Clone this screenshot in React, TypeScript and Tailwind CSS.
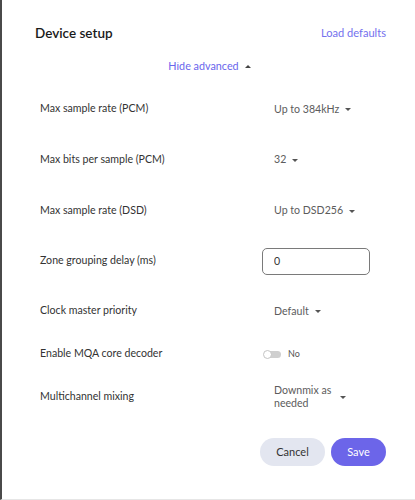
import React, { useState } from 'react';

const Caret = ({ up = false, className = '' }: { up?: boolean; className?: string }) => (
  <svg width="6" height="3" viewBox="0 0 6 3" className={className}>
    {up ? <path d="M0 3 L3 0 L6 3 Z" fill="currentColor" /> : <path d="M0 0 L6 0 L3 3 Z" fill="currentColor" />}
  </svg>
);

const Select = ({ value }: { value: React.ReactNode }) => (
  <div className="flex items-center gap-[6px] pl-[12px] text-[10.6px] leading-[13px] text-[#5c5c5c]">
    <span>{value}</span>
    <Caret className="text-[#555] mt-[1px]" />
  </div>
);

const Row = ({ label, h, children }: { label: string; h: string; children: React.ReactNode }) => (
  <div className={`flex items-center ${h}`}>
    <div className="w-[260px] shrink-0 pl-[38px] text-[10.6px] text-[#333]">{label}</div>
    <div className="flex-1">{children}</div>
  </div>
);

const App: React.FC = () => {
  const [mqa, setMqa] = useState(false);
  const [delay, setDelay] = useState('0');

  return (
    <div className="w-[415px] h-[500px] bg-white border-l-2 border-[#4a4a4a] border-b border-b-[#e6e6e6] overflow-hidden font-['Lato','Noto_Sans',sans-serif]">
      <div className="h-[62px] pt-[4px] flex items-center justify-between pl-[33px] pr-[29px]">
        <h2 className="text-[13.5px] font-semibold text-[#1a1a1a]">Device setup</h2>
        <button className="text-[11.1px] text-[#7471ee]">Load defaults</button>
      </div>

      <div className="h-[366px] overflow-hidden">
        <div className="-mt-[9px] mb-[5px] h-[26px] flex items-center justify-center gap-[6px] pl-[2px] text-[10.8px] text-[#6a66ec]">
          <span>Hide advanced</span>
          <Caret up className="text-[#444]" />
        </div>
        <Row label="Max sample rate (PCM)" h="h-[50px]">
          <Select value="Up to 384kHz" />
        </Row>
        <Row label="Max bits per sample (PCM)" h="h-[51px]">
          <Select value="32" />
        </Row>
        <Row label="Max sample rate (DSD)" h="h-[51px]">
          <Select value="Up to DSD256" />
        </Row>
        <Row label="Zone grouping delay (ms)" h="h-[50px]">
          <input
            value={delay}
            onChange={(e) => setDelay(e.target.value)}
            className="w-[108px] h-[27px] border border-[#7a7a7a] rounded-[5px] px-[11px] text-[10.6px] text-[#333] outline-none"
          />
        </Row>
        <Row label="Clock master priority" h="h-[50px]">
          <Select value="Default" />
        </Row>
        <Row label="Enable MQA core decoder" h="h-[36px]">
          <button onClick={() => setMqa(!mqa)} className="flex items-center gap-[7px] pl-[2px]">
            <span className={`relative w-[17px] h-[7px] rounded-full ${mqa ? 'bg-[#a6a3f5]' : 'bg-[#cfcfcf]'}`}>
              <span className={`absolute top-[-1px] w-[9px] h-[9px] rounded-full bg-white border border-[#c4c4c4] ${mqa ? 'left-[8px]' : 'left-[-1px]'}`} />
            </span>
            <span className="text-[9px] text-[#555]">{mqa ? 'Yes' : 'No'}</span>
          </button>
        </Row>
        <Row label="Multichannel mixing" h="h-[50px]">
          <div className="flex items-center gap-[6px] pl-[12px] text-[10.6px] leading-[13px] text-[#5c5c5c]">
            <span className="w-[60px]">Downmix as needed</span>
            <Caret className="text-[#555] mt-[1px]" />
          </div>
        </Row>
      </div>

      <div className="flex justify-end gap-[6px] pr-[29px] pt-[10px]">
        <button className="h-[28px] w-[65px] rounded-full bg-[#e3e6f0] text-[11px] text-[#333]">Cancel</button>
        <button className="h-[28px] w-[55px] rounded-full bg-[#6c65e9] text-[11px] text-white">Save</button>
      </div>
    </div>
  );
};

export default App;
